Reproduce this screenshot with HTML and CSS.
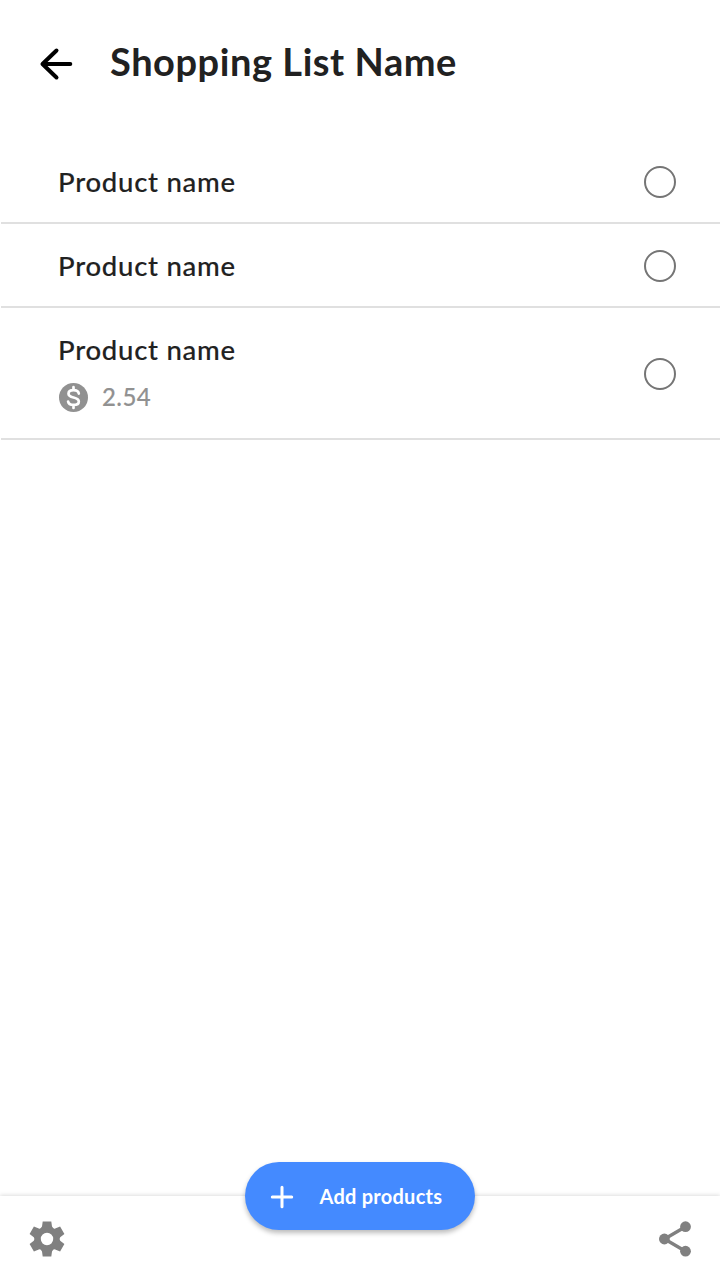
FILE: index.html
```html
<!DOCTYPE html>
<html lang="en">
<head>
<meta charset="utf-8">
<title>Shopping List Name</title>
<link rel="stylesheet" href="styles.css">
</head>
<body>
<div class="screen">
  <header class="header">
    <svg class="back" viewBox="0 0 48 48"><path d="M24.5 10.5 10.5 24l14 13.5M11 24h27.3"/></svg>
    <h1 class="title">Shopping List Name</h1>
  </header>
  <main class="list">
    <div class="item"><span class="name">Product name</span><span class="radio"></span></div>
    <div class="item"><span class="name">Product name</span><span class="radio"></span></div>
    <div class="item item-priced">
      <div class="details">
        <span class="name">Product name</span>
        <div class="price">
          <svg class="coin" viewBox="0 0 29 29"><circle cx="14.5" cy="14.5" r="14.5"/><path class="dollar" d="M14.5 4.2v3M14.5 22v3M19.8 10.6c-.4-2.3-2.6-3.4-5.3-3.4-2.9 0-5 1.3-5 3.5 0 2.4 2.3 3.1 5 3.8s5.3 1.4 5.3 3.9c0 2.2-2.2 3.5-5.2 3.5-2.8 0-5.1-1.1-5.5-3.4"/></svg>
          <span class="amount">2.54</span>
        </div>
      </div>
      <span class="radio"></span>
    </div>
  </main>
  <footer class="bar">
    <svg class="gear" viewBox="-18 -18 36 36"><path fill-rule="evenodd" d="M-4.3-17.6H4.3L5-12.4Q6.6-9.6 8.2-10.6L13.1-12.5 17.4-5 13.2-1.8Q12 0 13.2 1.8L17.4 5 13.1 12.5 8.2 10.6Q6.6 9.6 5 12.4L4.3 17.6H-4.3L-5 12.4Q-6.6 9.6-8.2 10.6L-13.1 12.5-17.4 5-13.2 1.8Q-12 0-13.2-1.8L-17.4-5-13.1-12.5-8.2-10.6Q-6.6-9.6-5-12.4zM0-6.2a6.2 6.2 0 1 0 0 12.4 6.2 6.2 0 0 0 0-12.4z"/></svg>
    <button class="add"><svg class="plus" viewBox="0 0 24 24"><path d="M2.3 12h19.4M12 2.3v19.4"/></svg><span>Add products</span></button>
    <svg class="share" viewBox="0 0 36 36"><path d="M29.5 5.7 8.5 18l21 12.3"/><circle cx="29.5" cy="5.7" r="5.4"/><circle cx="8.4" cy="18" r="5.4"/><circle cx="29.5" cy="30.2" r="5.4"/></svg>
  </footer>
</div>
</body>
</html>
```
FILE: styles.css
```css
* { box-sizing: border-box; }
body { margin: 0; background: #fff; font-family: Lato, sans-serif; color: #212121; }
.screen { width: 720px; height: 1280px; display: flex; flex-direction: column; overflow: hidden; }
.header { height: 140px; padding: 38px 32px 0; display: flex; align-items: flex-start; }
.back { width: 48px; height: 48px; margin-top: 2px; fill: none; stroke: #000; stroke-width: 4; stroke-linecap: round; stroke-linejoin: round; }
.title { margin: 0 0 0 30px; font-size: 38px; line-height: 46px; font-weight: 700; letter-spacing: .55px; white-space: nowrap; }
.list { flex: 1; padding-left: 1px; }
.item { height: 84px; padding: 2px 44px 0 57px; border-bottom: 2px solid #e0e0e0; display: flex; align-items: center; justify-content: space-between; }
.item-priced { height: 132px; }
.name { display: block; font-size: 27.5px; line-height: 34px; font-weight: 500; letter-spacing: .75px; -webkit-text-stroke: .15px #212121; }
.price { display: flex; align-items: center; gap: 14px; margin-top: 14px; padding-left: 1px; font-size: 24px; line-height: 34px; font-weight: 500; color: #919191; letter-spacing: .4px; -webkit-text-stroke: .15px #919191; }
.amount { margin: -1px 0 1px; }
.radio { width: 32px; height: 32px; border: 2px solid #757575; border-radius: 50%; }
.coin { width: 29px; height: 29px; margin-bottom: 1px; fill: #919191; }
.dollar { fill: none; stroke: #fff; stroke-width: 2.7; stroke-linecap: round; }
.bar { height: 84px; padding: 2px 28px 0 29px; display: flex; justify-content: space-between; align-items: center; box-shadow: 0 -1px 4px #0002; }
.gear, .share { width: 36px; height: 36px; fill: #808080; }
.share path { fill: none; stroke: #808080; stroke-width: 3.4; }
.add { width: 230px; height: 68px; margin: -86px 1px 0 0; padding: 1px 25px 0; border: 0; border-radius: 34px; background: #448aff; color: #fff; display: flex; align-items: center; gap: 25.5px; font: 700 20px Lato, sans-serif; letter-spacing: .25px; white-space: nowrap; box-shadow: 0 3px 5px #0004; }
.add span { padding-bottom: 1px; }
.plus { width: 24px; height: 24px; flex: none; stroke: #fff; stroke-width: 3; stroke-linecap: round; }
```
